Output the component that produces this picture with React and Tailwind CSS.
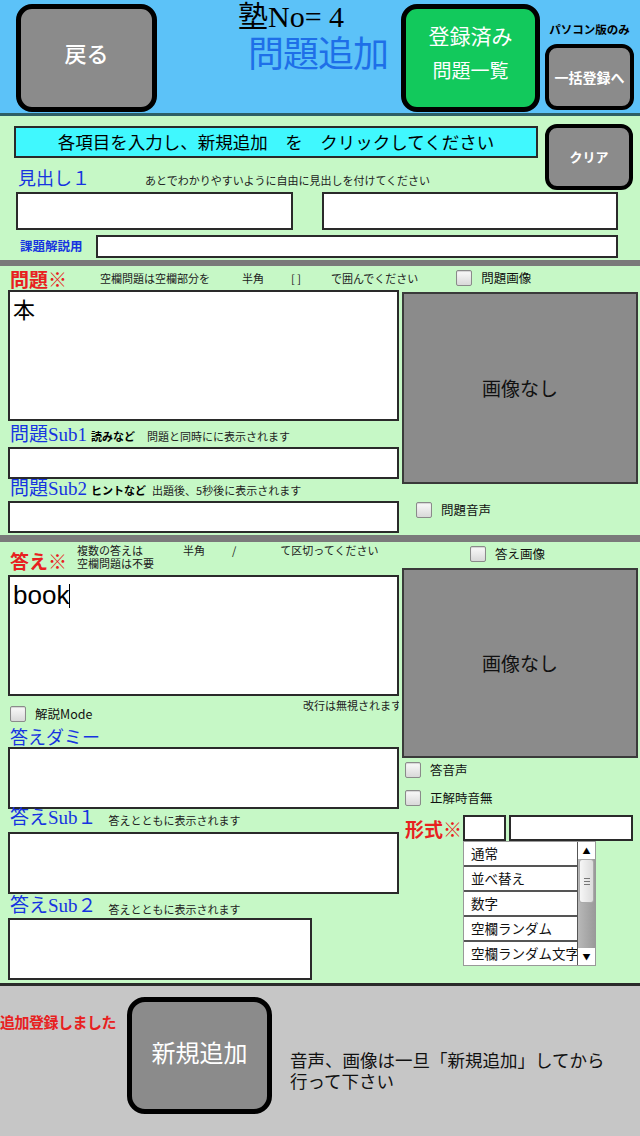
import React from "react";

const JP = { fontFamily: '"Noto Sans CJK JP", "Liberation Sans", sans-serif' };

function Check({ label, className = "" }) {
  return (
    <div className={"flex items-center gap-[9px] " + className}>
      <div className="w-[16px] h-[16px] border border-[#8a8a8a] rounded-[2px] bg-gradient-to-b from-[#fafafa] to-[#d9d9d9] shadow-[inset_0_1px_1px_rgba(0,0,0,0.15)]" />
      <span className="text-[12.5px] leading-none text-[#111]">{label}</span>
    </div>
  );
}

function Box({ className = "" }) {
  return <div className={"bg-white border-2 border-[#2a2a2a] " + className} />;
}

function NoImage({ className = "" }) {
  return (
    <div className={"bg-[#8b8b8b] border-2 border-[#3a3a3a] flex items-center justify-center text-[19px] text-[#111] " + className}>
      画像なし
    </div>
  );
}

const blue = "text-[#1634e0]";
const serifBlue = { fontFamily: '"Liberation Serif", "Noto Sans CJK JP", serif' };

export default function App() {
  return (
    <div className="w-[640px] h-[1136px] overflow-hidden flex flex-col bg-[#c6f8c6]" style={JP}>
      {/* Header */}
      <div className="h-[116px] shrink-0 bg-[#5cc2f8] border-b-[3px] border-[#2e5f66] flex items-start">
        <div className="ml-[16px] mt-[4px] w-[141px] h-[108px] pb-[12px] bg-[#8b8b8b] border-[5px] border-black rounded-[16px] flex items-center justify-center text-white text-[22px] font-medium">
          戻る
        </div>
        <div className="w-[244px] h-full flex flex-col">
          <div className="ml-[81px] mt-[1px] text-[30px] leading-[32px] text-black" style={{ fontFamily: '"Liberation Serif", "Noto Sans CJK JP", serif' }}>
            塾No= 4
          </div>
          <div className="ml-[91px] -mt-[2px] text-[36px] leading-[40px] text-[#1e6fe8] tracking-[-1px]">問題追加</div>
        </div>
        <div className="mt-[4px] w-[139px] h-[108px] pt-[13px] bg-[#12c95c] border-[5px] border-black rounded-[16px] flex flex-col items-center text-white gap-[10px]">
          <span className="text-[21px] leading-[26px]">登録済み</span>
          <span className="text-[19px] leading-[24px]">問題一覧</span>
        </div>
        <div className="ml-[5px] w-[89px] flex flex-col items-center">
          <div className="mt-[21px] text-[11.5px] font-bold leading-[16px] text-black whitespace-nowrap">パソコン版のみ</div>
          <div className="mt-[7px] w-[89px] h-[66px] bg-[#8b8b8b] border-[4px] border-black rounded-[12px] flex items-center justify-center text-white text-[14px] font-bold whitespace-nowrap">
            一括登録へ
          </div>
        </div>
      </div>

      {/* Section 1 */}
      <div className="h-[144px] shrink-0 flex flex-col">
        <div className="flex items-start">
          <div className="w-[538px] pl-[14px] pt-[10px]">
            <div className="h-[32px] bg-[#40f8fe] border-2 border-[#2a2a2a] flex items-center justify-center text-[17.5px] text-black whitespace-nowrap">
              各項目を入力し、新規追加　を　クリックしてください
            </div>
            <div className="flex items-end h-[34px] pl-[4px] pb-[2px]">
              <span className={"text-[18px] leading-[22px] " + blue} style={serifBlue}>見出し１</span>
              <span className="ml-[55px] mb-[4px] text-[11px] leading-none text-[#222]">あとでわかりやすいように自由に見出しを付けてください</span>
            </div>
          </div>
          <div className="ml-[7px] mt-[8px] w-[88px] h-[66px] bg-[#8b8b8b] border-[4px] border-black rounded-[12px] flex items-center justify-center text-white text-[13px] font-bold">
            クリア
          </div>
        </div>
        <div className="flex">
          <Box className="ml-[16px] w-[277px] h-[38px]" />
          <Box className="ml-[29px] w-[296px] h-[38px]" />
        </div>
        <div className="flex items-center mt-[5px]">
          <span className={"ml-[20px] w-[76px] text-[12.5px] font-bold leading-none " + blue}>課題解説用</span>
          <Box className="w-[522px] h-[23px]" />
        </div>
      </div>

      <div className="h-[6px] shrink-0 bg-[#7a7a7a]" />

      {/* Section 2 */}
      <div className="h-[269px] shrink-0 flex flex-col">
        <div className="h-[24px] flex items-center">
          <span className="ml-[10px] w-[90px] text-[19px] font-bold leading-none text-[#e82020]">問題※</span>
          <span className="text-[11px] text-[#222] whitespace-nowrap">空欄問題は空欄部分を</span>
          <span className="ml-[32px] text-[11px] text-[#222]">半角</span>
          <span className="ml-[27px] text-[11px] text-[#222]">[ ]</span>
          <span className="ml-[30px] text-[11px] text-[#222] whitespace-nowrap">で囲んでください</span>
          <Check label="問題画像" className="ml-[38px]" />
        </div>
        <div className="flex">
          <div className="ml-[8px] w-[391px] flex flex-col">
            <div className="h-[131px] bg-white border-2 border-[#2a2a2a] px-[3px] pt-[2px] text-[22px] leading-[28px] text-black">本</div>
            <div className="h-[26px] flex items-end pl-[2px]">
              <span className={"text-[19px] leading-[24px] " + blue} style={serifBlue}>問題Sub1</span>
              <span className="ml-[4px] mb-[5px] text-[11px] font-bold leading-none text-black">読みなど</span>
              <span className="ml-[12px] mb-[5px] text-[11px] leading-none text-[#222]">問題と同時にに表示されます</span>
            </div>
            <Box className="h-[32px]" />
            <div className="h-[22px] flex items-end pl-[2px]">
              <span className={"text-[19px] leading-[24px] " + blue} style={serifBlue}>問題Sub2</span>
              <span className="ml-[4px] mb-[5px] text-[11px] font-bold leading-none text-black">ヒントなど</span>
              <span className="ml-[6px] mb-[5px] text-[11px] leading-none text-[#222]">出題後、5秒後に表示されます</span>
            </div>
            <Box className="h-[32px]" />
          </div>
          <div className="ml-[3px] w-[236px] flex flex-col">
            <NoImage className="mt-[2px] h-[192px]" />
            <Check label="問題音声" className="ml-[14px] mt-[18px]" />
          </div>
        </div>
      </div>

      <div className="h-[7px] shrink-0 bg-[#7a7a7a]" />

      {/* Section 3 */}
      <div className="h-[441px] shrink-0 flex">
        <div className="ml-[8px] w-[391px] flex flex-col">
          <div className="h-[33px] flex items-center">
            <span className="ml-[2px] w-[67px] text-[19px] font-bold leading-none text-[#e82020] mt-[4px]">答え※</span>
            <div className="flex flex-col text-[11px] leading-[13px] text-[#222] -mt-[3px]">
              <div className="flex whitespace-nowrap">
                <span>複数の答えは</span>
                <span className="ml-[40px]">半角</span>
                <span className="ml-[27px]">/</span>
                <span className="ml-[44px]">て区切ってください</span>
              </div>
              <span>空欄問題は不要</span>
            </div>
          </div>
          <div className="h-[121px] bg-white border-2 border-[#2a2a2a] px-[3px] pt-[2px] flex items-start">
            <span className="text-[26px] leading-[32px] text-black" style={{ fontFamily: '"Liberation Sans", sans-serif' }}>book</span>
            <span className="mt-[5px] w-[1px] h-[24px] bg-black" />
          </div>
          <div className="h-[28px] flex items-start justify-between">
            <Check label="解説Mode" className="ml-[2px] mt-[10px]" />
            <span className="mt-[4px] text-[11px] leading-none text-[#222] whitespace-nowrap overflow-hidden w-[96px]">改行は無視されます</span>
          </div>
          <div className="h-[23px] flex items-end pl-[2px]">
            <span className={"text-[18px] leading-[22px] " + blue}>答えダミー</span>
          </div>
          <Box className="h-[62px]" />
          <div className="h-[22px] flex items-end pl-[2px] -mt-[2px]">
            <span className={"text-[19px] leading-[22px] " + blue} style={serifBlue}>答えSub１</span>
            <span className="ml-[12px] mb-[3px] text-[11px] leading-none text-[#222]">答えとともに表示されます</span>
          </div>
          <Box className="mt-[3px] h-[62px]" />
          <div className="h-[23px] flex items-end pl-[2px]">
            <span className={"text-[19px] leading-[22px] " + blue} style={serifBlue}>答えSub２</span>
            <span className="ml-[12px] mb-[2px] text-[11px] leading-none text-[#222]">答えとともに表示されます</span>
          </div>
          <Box className="mt-[1px] w-[304px] h-[62px]" />
        </div>
        <div className="ml-[3px] w-[236px] flex flex-col">
          <Check label="答え画像" className="ml-[68px] mt-[4px] h-[16px]" />
          <NoImage className="mt-[6px] h-[190px]" />
          <Check label="答音声" className="ml-[3px] mt-[4px]" />
          <Check label="正解時音無" className="ml-[3px] mt-[12px]" />
          <div className="flex items-end mt-[9px]">
            <span className="ml-[3px] w-[58px] text-[19px] font-bold leading-[24px] text-[#e82020]">形式※</span>
            <Box className="w-[43px] h-[26px]" />
            <Box className="ml-[3px] w-[124px] h-[26px]" />
          </div>
          <div className="ml-[61px] w-[133px] h-[125px] flex border border-[#999] bg-white">
            <div className="flex-1 flex flex-col overflow-hidden">
              {["通常", "並べ替え", "数字", "空欄ランダム", "空欄ランダム文字"].map((t) => (
                <div key={t} className="h-[25px] shrink-0 border-b-2 border-[#555] border-r flex items-center pl-[7px] text-[13.5px] text-[#111] whitespace-nowrap overflow-hidden">
                  {t}
                </div>
              ))}
            </div>
            <div className="w-[17px] flex flex-col bg-gradient-to-r from-[#b8b8b8] to-[#9a9a9a]">
              <div className="h-[17px] bg-white flex items-center justify-center text-[8px] text-black">▲</div>
              <div className="mx-[1px] h-[44px] bg-gradient-to-r from-[#f6f6f6] to-[#dcdcdc] rounded-[3px] border border-[#aaa] flex items-center justify-center">
                <div className="flex flex-col gap-[2px]">
                  <div className="w-[6px] h-[1px] bg-[#777]" />
                  <div className="w-[6px] h-[1px] bg-[#777]" />
                  <div className="w-[6px] h-[1px] bg-[#777]" />
                </div>
              </div>
              <div className="flex-1" />
              <div className="h-[17px] bg-white flex items-center justify-center text-[8px] text-black">▼</div>
            </div>
          </div>
        </div>
      </div>

      <div className="h-[3px] shrink-0 bg-[#2a2a2a]" />

      {/* Footer */}
      <div className="flex-1 bg-[#c6c6c6] flex items-start">
        <span className="mt-[28px] w-[127px] text-[15px] font-bold leading-none text-[#e82020] whitespace-nowrap tracking-[-0.5px]">追加登録しました</span>
        <div className="mt-[11px] w-[145px] h-[117px] pb-[8px] bg-[#8b8b8b] border-[5px] border-black rounded-[18px] flex items-center justify-center text-white text-[24px]">
          新規追加
        </div>
        <div className="ml-[18px] mt-[63px] text-[17.5px] leading-[21px] text-[#111]">
          音声、画像は一旦「新規追加」してから<br />行って下さい
        </div>
      </div>
    </div>
  );
}
